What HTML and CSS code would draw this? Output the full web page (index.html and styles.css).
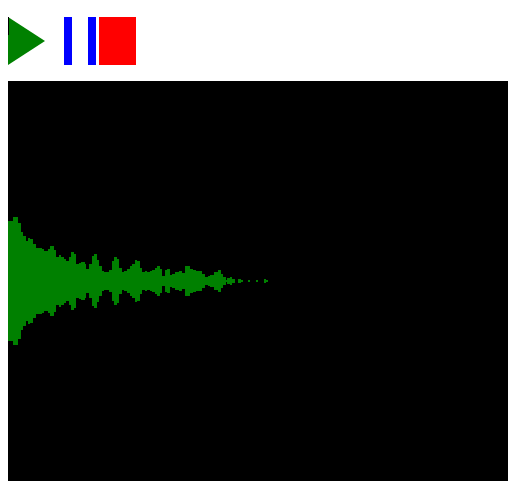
FILE: index.html
```
<!DOCTYPE html>
<html>
<head>
<link rel="stylesheet" href="styles.css">
</head>
<body>

<div class="controls">
    <svg class="play" viewBox="0 0 37 48">
        <polygon points="0,0 37,24 0,48" fill="#008000"/>
        <rect x="0" y="0" width="1" height="18" fill="#000"/>
    </svg>
    <div class="pause">
        <span class="pause-bar"></span>
        <span class="pause-bar"></span>
    </div>
    <div class="stop"></div>
</div>

<svg class="scope" viewBox="8 81 500 400" shape-rendering="crispEdges">
    <defs>
        <path id="wave" fill="#008000" d="M8 281 V221 H13 V217 H18 V223 H21 V232 H23 V236 H26 V241 H28 V238 H30 V239 H33 V244 H36 V248 H42 V249 H44 V251 H48 V249 H50 V246 H54 V250 H56 V257 H59 V255 H61 V257 H64 V259 H66 V261 H69 V257 H71 V252 H74 V254 H76 V264 H79 V263 H81 V262 H85 V264 H86 V269 H89 V264 H92 V256 H94 V254 H97 V260 H99 V266 H102 V271 H104 V272 H109 V270 H112 V261 H114 V257 H117 V259 H119 V268 H122 V272 H124 V271 H127 V269 H130 V266 H132 V264 H135 V260 H137 V261 H140 V268 H142 V272 H145 V271 H147 V272 H150 V271 H152 V270 H155 V268 H157 V266 H160 V269 H162 V276 H165 V270 H167 V269 H170 V275 H172 V274 H175 V272 H179 V271 H182 V273 H185 V266 H190 V269 H193 V270 H196 V271 H202 V274 H205 V277 H208 V276 H210 V275 H214 V272 H218 V270 H221 V274 H223 V277 H226 V280 H227 V278 H230 V277 H232 V279 H235 V281 H238 V279 H241 V280 H243 V281 H248 V280 H250 V281 H256 V280 H258 V281 H264 V279 H266 V280 H268 V281 Z"/>
    </defs>
    <use href="#wave"/>
    <!-- bottom half is the same shape flipped around y=281 -->
    <use href="#wave" transform="translate(0 562) scale(1 -1)"/>
</svg>

</body>
</html>
```

FILE: styles.css
```
html, body {
    background-color: #ffffff;
}

body {
    margin: 8px 0 0 8px;
}

.controls {
    display: flex;
    height: 48px;
    padding-top: 9px;
    margin-bottom: 16px;
}

.play {
    display: block;
    width: 37px;
    height: 48px;
    margin-right: 19px;
}

.pause {
    display: flex;
    gap: 16px;
    margin-right: 3px;
}

.pause-bar {
    width: 8px;
    background-color: #0000ff;
}

.stop {
    width: 37px;
    background-color: #ff0000;
}

.scope {
    display: block;
    width: 500px;
    height: 400px;
    background-color: #000000;
}
```
